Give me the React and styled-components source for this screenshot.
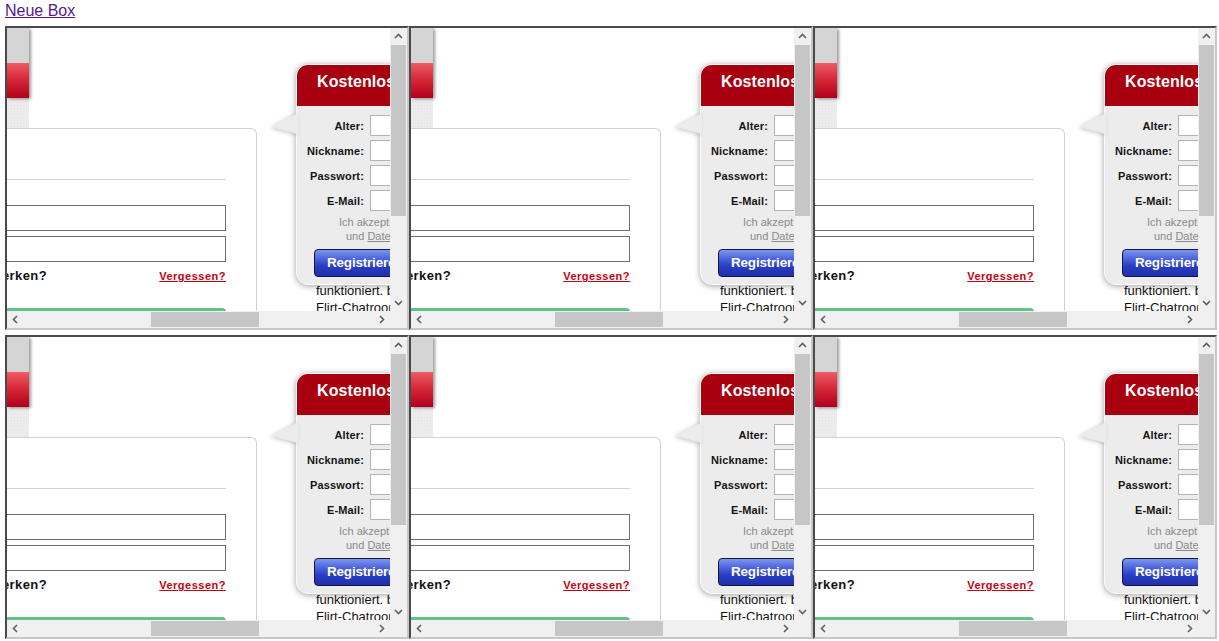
import React from "react";
import styled, { createGlobalStyle } from "styled-components";

const Global = createGlobalStyle`
  html, body { margin: 0; padding: 0; background: #fff; }
  body { font-family: "Liberation Sans", Arial, sans-serif; }
`;

const Page = styled.div`
  padding: 2px 0 0 5px;
`;

const LinkBar = styled.div`
  height: 18px;
  font: 16px/18px "Liberation Sans", Arial, sans-serif;
`;

const NewBoxLink = styled.a`
  color: #551a8b;
  text-decoration: underline;
  cursor: pointer;
`;

const FrameGrid = styled.div`
  display: grid;
  grid-template-columns: repeat(3, 404px);
  row-gap: 5px;
  margin-top: 6px;
`;

/* one embedded window: viewport + scrollbars */
const Frame = styled.div`
  box-sizing: border-box;
  width: 404px;
  height: 304px;
  border: 2px solid;
  border-color: #4a4a4a #c6c6c6 #c6c6c6 #4a4a4a;
  background: #fff;
  display: grid;
  grid-template-columns: 383px 17px;
  grid-template-rows: 283px 17px;
`;

const Viewport = styled.div`
  overflow: hidden;
  position: relative;
  background: #fff;
`;

const Canvas = styled.div`
  display: flex;
  align-items: flex-start;
  width: 720px;
  margin-left: -120px;
  font-family: "Liberation Sans", Arial, sans-serif;
`;

/* left side of the embedded page */
const Sidebar = styled.div`
  flex: none;
  width: 370px;
  display: flex;
  flex-direction: column;
`;

const Tab = styled.div`
  margin-left: 120px;
  width: 22px;
  display: flex;
  flex-direction: column;
`;

const TabHandle = styled.div`
  display: flex;
  flex-direction: column;
  box-shadow: 2px 1px 3px rgba(0, 0, 0, 0.4);
  position: relative;
  z-index: 1;
`;

const TabGray = styled.div`
  height: 35px;
  background: #d5d5d5;
`;

const TabRed = styled.div`
  height: 35px;
  background: linear-gradient(#ef5b66 0%, #d62a3a 45%, #b1001b 100%);
`;

const TabFoot = styled.div`
  height: 30px;
  background-color: #ececec;
  background-image: radial-gradient(rgba(0, 0, 0, 0.035) 1px, transparent 1px);
  background-size: 3px 3px;
`;

const Panel = styled.div`
  box-sizing: border-box;
  border-top: 1px solid #d0d0d0;
  border-right: 1px solid #d0d0d0;
  border-top-right-radius: 6px;
  padding: 50px 30px 0 0;
  height: 260px;
`;

const Divider = styled.div`
  height: 1px;
  background: #d2d2d2;
`;

const WideInput = styled.div`
  box-sizing: border-box;
  height: 26px;
  border: 1px solid #6e6e6e;
  background: #fff;
  margin-top: ${(p) => p.$gap}px;
`;

const OptionRow = styled.div`
  display: flex;
  align-items: baseline;
  margin-top: 6px;
  height: 16px;
`;

const RememberLabel = styled.span`
  flex: none;
  width: 160px;
  text-align: right;
  white-space: nowrap;
  font: bold 13px/16px "Liberation Sans", Arial, sans-serif;
  letter-spacing: 0.4px;
  color: #111;
`;

const ForgotLink = styled.a`
  margin-left: auto;
  font: bold 11px/16px "Liberation Sans", Arial, sans-serif;
  letter-spacing: 0.5px;
  color: #c4000f;
  text-decoration: underline;
`;

const LoginButton = styled.div`
  margin-top: 24px;
  height: 30px;
  background: #62c08a;
  border-top-right-radius: 4px;
`;

/* right side: signup callout */
const Aside = styled.div`
  flex: none;
  margin-left: 39px;
  width: 300px;
  display: flex;
  flex-direction: column;
`;

const CalloutWrap = styled.div`
  position: relative;
  z-index: 1;
  margin-top: 36px;
`;

const Callout = styled.div`
  width: 260px;
  border: 1px solid #fbfbfb;
  border-radius: 12px;
  background: #ececec;
  box-shadow: 0 1px 6px rgba(0, 0, 0, 0.38);
`;

const Pointer = styled.svg`
  position: absolute;
  left: -24px;
  top: 49px;
  width: 26px;
  height: 22px;
  filter: drop-shadow(-2px 1px 2px rgba(0, 0, 0, 0.22));
`;

const CalloutHead = styled.div`
  box-sizing: border-box;
  height: 41px;
  background: #a9000f;
  border-radius: 11px 11px 0 0;
  padding: 7px 0 0 20px;
  color: #fff;
  font: bold 16px/20px "Liberation Sans", Arial, sans-serif;
  letter-spacing: 0.1px;
  white-space: nowrap;
`;

const CalloutBody = styled.div`
  padding: 9px 0 7px 0;
`;

const FieldRow = styled.div`
  display: flex;
  align-items: center;
  height: 21px;
  margin-bottom: 4px;
`;

const FieldLabel = styled.label`
  width: 67px;
  margin-right: 6px;
  text-align: right;
  font: bold 11px/14px "Liberation Sans", Arial, sans-serif;
  letter-spacing: 0.15px;
  color: #151515;
  white-space: nowrap;
`;

const FieldBox = styled.div`
  box-sizing: border-box;
  width: 120px;
  height: 21px;
  border: 1px solid #b4b4b4;
  background: #fff;
`;

const Terms = styled.div`
  margin-top: 3px;
  font: 11px/14px "Liberation Sans", Arial, sans-serif;
  color: #8a8a8a;
  white-space: nowrap;
`;

const TermsLine = styled.div`
  padding-left: ${(p) => p.$indent}px;
`;

const TermsLink = styled.span`
  text-decoration: underline;
`;

const SignupButton = styled.div`
  box-sizing: border-box;
  margin: 6px 0 0 17px;
  width: 200px;
  height: 28px;
  border: 1px solid #15163a;
  border-radius: 4px;
  background: linear-gradient(#7d97f0 0%, #4a62dc 35%, #2b3fc4 60%, #1f2fae 100%);
  color: #fff;
  font: bold 13.5px/26px "Liberation Sans", Arial, sans-serif;
  letter-spacing: -0.2px;
  padding-left: 12px;
  white-space: nowrap;
`;

const Teaser = styled.p`
  margin: -3px 0 0 20px;
  font: 13px/17px "Liberation Sans", Arial, sans-serif;
  color: #111;
  white-space: nowrap;
`;

/* scrollbars */
const VBar = styled.div`
  background: #f0f0f0;
  display: flex;
  flex-direction: column;
  align-items: center;
`;

const HBar = styled.div`
  background: #f0f0f0;
  display: flex;
  align-items: center;
`;

const Corner = styled.div`
  background: #f0f0f0;
`;

const ArrowBtn = styled.div`
  flex: none;
  width: 17px;
  height: 17px;
  display: flex;
  align-items: center;
  justify-content: center;
`;

const Spacer = styled.div`
  flex: 1;
`;

const VThumb = styled.div`
  flex: none;
  width: 15px;
  height: 171px;
  background: #c6c6c6;
`;

const HThumb = styled.div`
  flex: none;
  height: 15px;
  width: 108px;
  margin-left: 127px;
  background: #c6c6c6;
`;

const Chevron = ({ dir }) => {
  const pts = {
    up: "1,6 4.5,2.5 8,6",
    down: "1,3 4.5,6.5 8,3",
    left: "6,1 2.5,4.5 6,8",
    right: "3,1 6.5,4.5 3,8",
  }[dir];
  return (
    <svg width="9" height="9" viewBox="0 0 9 9">
      <polyline points={pts} fill="none" stroke="#5f5f5f" strokeWidth="1.6" />
    </svg>
  );
};

const fields = ["Alter:", "Nickname:", "Passwort:", "E-Mail:"];

function EmbeddedPage() {
  return (
    <Canvas>
      <Sidebar>
        <Tab>
          <TabHandle>
            <TabGray />
            <TabRed />
          </TabHandle>
          <TabFoot />
        </Tab>
        <Panel>
          <Divider />
          <WideInput $gap={25} />
          <WideInput $gap={5} />
          <OptionRow>
            <RememberLabel>Passwort merken?</RememberLabel>
            <ForgotLink>Vergessen?</ForgotLink>
          </OptionRow>
          <LoginButton />
        </Panel>
      </Sidebar>
      <Aside>
        <CalloutWrap>
          <Callout>
            <CalloutHead>Kostenlos registrieren</CalloutHead>
            <CalloutBody>
              {fields.map((f) => (
                <FieldRow key={f}>
                  <FieldLabel>{f}</FieldLabel>
                  <FieldBox />
                </FieldRow>
              ))}
              <Terms>
                <TermsLine $indent={42}>Ich akzeptiere die AGB</TermsLine>
                <TermsLine $indent={49}>
                  und <TermsLink>Datenschutz</TermsLink>
                </TermsLine>
              </Terms>
              <SignupButton>Registrieren</SignupButton>
            </CalloutBody>
          </Callout>
          <Pointer viewBox="0 0 26 22">
            <polygon points="0,14 26,0 26,21" fill="#ececec" />
          </Pointer>
        </CalloutWrap>
        <Teaser>
          funktioniert. bei uns im
          <br />
          Flirt-Chatroom und lerne
        </Teaser>
      </Aside>
    </Canvas>
  );
}

function BoxFrame() {
  return (
    <Frame>
      <Viewport>
        <EmbeddedPage />
      </Viewport>
      <VBar>
        <ArrowBtn>
          <Chevron dir="up" />
        </ArrowBtn>
        <VThumb />
        <Spacer />
        <ArrowBtn>
          <Chevron dir="down" />
        </ArrowBtn>
      </VBar>
      <HBar>
        <ArrowBtn>
          <Chevron dir="left" />
        </ArrowBtn>
        <HThumb />
        <Spacer />
        <ArrowBtn>
          <Chevron dir="right" />
        </ArrowBtn>
      </HBar>
      <Corner />
    </Frame>
  );
}

export default function App() {
  const boxes = [0, 1, 2, 3, 4, 5];
  return (
    <Page>
      <Global />
      <LinkBar>
        <NewBoxLink>Neue Box</NewBoxLink>
      </LinkBar>
      <FrameGrid>
        {boxes.map((b) => (
          <BoxFrame key={b} />
        ))}
      </FrameGrid>
    </Page>
  );
}
